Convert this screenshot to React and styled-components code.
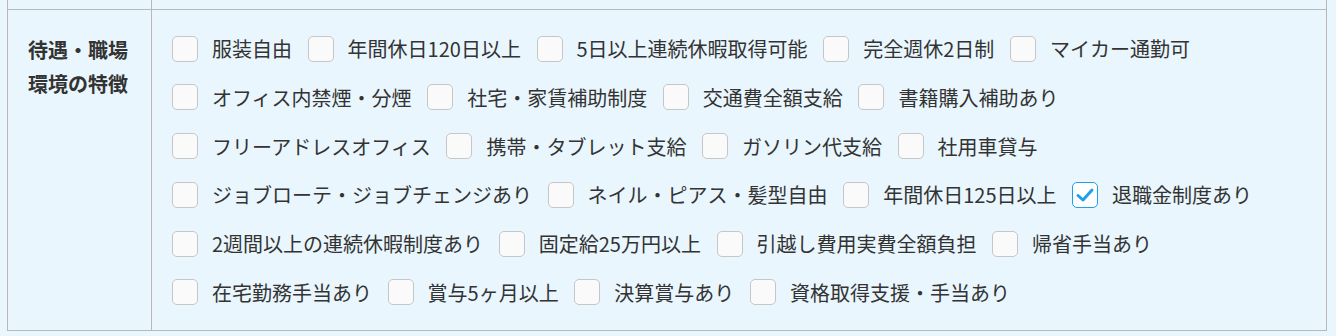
import React from "react";
import styled, { createGlobalStyle } from "styled-components";

const Global = createGlobalStyle`
  html, body { margin: 0; padding: 0; background: #e9f6fd; }
  body {
    font-family: "Noto Sans CJK JP", "Noto Sans", sans-serif;
    color: #333;
  }
`;

const Page = styled.div`
  padding: 0 9px 0 7px;
`;

const Table = styled.div`
  border-left: 1px solid #b8b8b8;
  border-right: 1px solid #b8b8b8;
  border-bottom: 1px solid #b8b8b8;
`;

const Row = styled.div`
  display: grid;
  grid-template-columns: 144px 1fr;
  border-top: ${(p) => (p.$first ? "none" : "1px solid #b8b8b8")};
  min-height: ${(p) => p.$h || 0}px;
`;

const HeadCell = styled.div`
  border-right: 1px solid #b8b8b8;
  padding: ${(p) => (p.$empty ? "0" : "23px 10px 20px 20px")};
  font-weight: 700;
  font-size: 20px;
  line-height: 34px;
`;

const BodyCell = styled.div`
  padding: 21px 20px 20px 20px;
  display: flex;
  flex-direction: column;
  row-gap: 13.8px;
`;

const Line = styled.div`
  display: flex;
  column-gap: 15.6px;
`;

const Item = styled.label`
  display: flex;
  align-items: center;
  height: 35px;
  gap: 14px;
  font-size: 20px;
  color: #333;
  white-space: nowrap;
`;

const Box = styled.span`
  width: 26px;
  height: 26px;
  box-sizing: border-box;
  border-radius: 5px;
  border: ${(p) => (p.$checked ? "1.5px solid #1ea0ea" : "1px solid #c6c6c6")};
  background: ${(p) => (p.$checked ? "#ffffff" : "#fafafa")};
  display: flex;
  align-items: center;
  justify-content: center;
  flex-shrink: 0;
`;

const lines = [
  ["服装自由", "年間休日120日以上", "5日以上連続休暇取得可能", "完全週休2日制", "マイカー通勤可"],
  ["オフィス内禁煙・分煙", "社宅・家賃補助制度", "交通費全額支給", "書籍購入補助あり"],
  ["フリーアドレスオフィス", "携帯・タブレット支給", "ガソリン代支給", "社用車貸与"],
  ["ジョブローテ・ジョブチェンジあり", "ネイル・ピアス・髪型自由", "年間休日125日以上", "退職金制度あり"],
  ["2週間以上の連続休暇制度あり", "固定給25万円以上", "引越し費用実費全額負担", "帰省手当あり"],
  ["在宅勤務手当あり", "賞与5ヶ月以上", "決算賞与あり", "資格取得支援・手当あり"],
];

const checked = new Set(["退職金制度あり"]);

function Check({ on }) {
  return (
    <Box $checked={on}>
      {on && (
        <svg width="20" height="20" viewBox="0 0 20 20">
          <polyline
            points="3,10.5 8,15 17,5"
            fill="none"
            stroke="#1ea0ea"
            strokeWidth="3"
            strokeLinecap="round"
            strokeLinejoin="round"
          />
        </svg>
      )}
    </Box>
  );
}

export default function App() {
  return (
    <>
      <Global />
      <Page>
        <Table>
          <Row $first $h={9}>
            <HeadCell $empty />
            <div />
          </Row>
          <Row>
            <HeadCell>
              待遇・職場
              <br />
              環境の特徴
            </HeadCell>
            <BodyCell>
              {lines.map((line, li) => (
                <Line key={li}>
                  {line.map((t) => (
                    <Item key={t}>
                      <Check on={checked.has(t)} />
                      {t}
                    </Item>
                  ))}
                </Line>
              ))}
            </BodyCell>
          </Row>
        </Table>
      </Page>
    </>
  );
}
